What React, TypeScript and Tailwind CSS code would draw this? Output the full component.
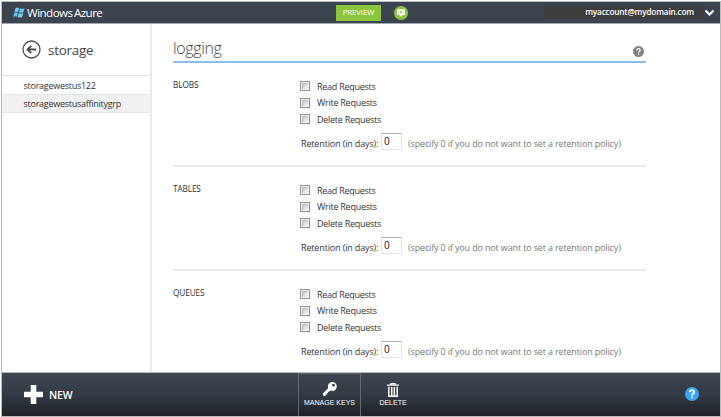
import React from "react";

const requests = ["Read Requests", "Write Requests", "Delete Requests"];

function Checkbox() {
  return (
    <span className="flex size-[10px] shrink-0 border border-[#8e8f8f] bg-[#f4f4f4] p-px">
      <span className="flex-1 border-t border-l border-[#b4b8bb] bg-linear-to-br from-[#c9cdd1] to-[#f3f3f3]" />
    </span>
  );
}

function Section({ title, last }: { title: string; last?: boolean }) {
  return (
    <section
      className={`flex h-[104px] shrink-0 pt-[15px] ${last ? "" : "border-b-2 border-[#e9e9e9]"}`}
    >
      <h2 className="w-[127px] shrink-0 pt-px text-[8.3px] leading-[12px] font-medium tracking-[-0.15px] text-[#333]">
        {title}
      </h2>
      <div className="text-[9px] whitespace-nowrap text-[#333]">
        {requests.map((r) => (
          <div key={r} className="flex h-[16.5px] items-center gap-[7px]">
            <Checkbox />
            <span className="tracking-[-0.26px]">{r}</span>
          </div>
        ))}
        <div className="mt-[5px] flex h-[20px] items-start tracking-[-0.15px]">
          <span className="w-[81px] pt-[3px] pl-[1px] leading-[15px]">Retention (in days):</span>
          <span className="flex h-[17px] w-[21px] items-center rounded-[1px] border border-[#dfe2ec] border-t-[#a9adb5] pt-px pl-[2px] text-[10px] text-[#222]">
            0
          </span>
          <span className="pt-[3px] pl-[6px] leading-[15px] text-[#777]">
            (specify 0 if you do not want to set a retention policy)
          </span>
        </div>
      </div>
    </section>
  );
}

function WindowsLogo() {
  return (
    <svg width="12" height="11" viewBox="0 0 12 11">
      <path d="M2.5 1.1Q4.4.1 6.1 1L5.1 4.9Q3.3 4 1.5 5Z" fill="#79cdf4" />
      <path d="M6.9 1.3Q9 2.3 11.6 1.3L10.5 5.2Q8.2 6.2 5.9 5.2Z" fill="#62c1f0" />
      <path d="M1.2 5.8Q3 4.8 4.9 5.7L3.9 9.6Q2 8.7.2 9.7Z" fill="#62c1f0" />
      <path d="M5.7 6Q7.8 7 10.3 6L9.2 9.9Q7 10.9 4.6 9.9Z" fill="#79cdf4" />
    </svg>
  );
}

export default function App() {
  return (
    <div className="h-[417px] w-[721px] overflow-hidden bg-white pt-px pl-px font-['Open_Sans','Noto_Sans',sans-serif]">
      <div className="flex h-full flex-col border border-[#b9bbbd]">
        <header className="flex h-[22px] shrink-0 items-center border-b border-[#a5a9ad] bg-[#3c4450] text-white">
          <div className="flex w-[334px] items-center gap-[2px] pl-[11px]">
            <WindowsLogo />
            <span className="pt-px text-[11.6px] leading-[20px] tracking-[-0.55px] [word-spacing:-1px]">Windows Azure</span>
          </div>
          <span className="flex h-[16px] w-[45px] items-center justify-center bg-[#8cc63e] text-[7.8px] tracking-[-0.1px]">
            PREVIEW
          </span>
          <svg className="ml-[13px]" width="14" height="14" viewBox="0 0 14 14">
            <circle cx="7" cy="7" r="7" fill="#8cc63e" />
            <path d="M3.2 3.3h7.6v5.6H8.6L7 10.8 5.4 8.9H3.2Z" fill="#fff" />
            <path d="M7 4.6v3M5.5 6.1h3" stroke="#8cc63e" strokeWidth="1" />
          </svg>
          <span className="ml-auto flex h-[12px] w-[160px] items-center justify-end bg-[#3d3d3d] pr-[10px] text-[8.2px] font-semibold tracking-[-0.17px]">
            myaccount@mydomain.com
          </span>
          <svg className="mr-[5px]" width="11" height="8" viewBox="0 0 11 8">
            <path d="M1.5 1.5 5.5 5.5 9.5 1.5" fill="none" stroke="#fff" strokeWidth="2" />
          </svg>
        </header>

        <div className="flex min-h-0 flex-1">
          <nav className="w-[150px] shrink-0 border-r-2 border-[#e9e9e9] text-[9px] tracking-[-0.26px] text-[#333]">
            <div className="flex h-[52px] items-center gap-[7px] border-b border-[#e4e4e4] pl-[20px]">
              <svg width="19" height="19" viewBox="0 0 19 19" fill="none" stroke="#4c4c4c">
                <circle cx="9.5" cy="9.5" r="8.5" strokeWidth="1.3" />
                <path d="M14 9.5H5.8M9.2 5.8 5.5 9.5 9.2 13.2" strokeWidth="1.9" />
              </svg>
              <span className="text-[13.3px] leading-[20px] tracking-[-0.2px] text-[#444]">storage</span>
            </div>
            <div className="flex h-[18px] items-center pt-px pl-[21.5px]">storagewestus122</div>
            <div className="flex h-[19px] items-center border-y border-[#e4e4e4] bg-[#f1f1f1] pl-[21.5px]">
              storagewestusaffinitygrp
            </div>
          </nav>

          <main className="w-[494px] pl-[21px]">
            <div className="flex h-[39px] items-end justify-between border-b-2 border-t-0 border-[#8ebce5]">
              <h1 className="pb-[2px] text-[16px] leading-[22px] font-light tracking-[-0.35px] text-[#444]">logging</h1>
              <svg className="mr-[2px] mb-[4px]" width="11" height="11" viewBox="0 0 11 11">
                <circle cx="5.5" cy="5.5" r="5.5" fill="#828282" />
                <path d="M3.8 4.3Q3.9 2.7 5.5 2.7T7.2 4.2Q7.2 5 6.3 5.5 5.6 5.9 5.6 6.6M5.6 7.5v1.3" fill="none" stroke="#fff" strokeWidth="1.3" />
              </svg>
            </div>
            <Section title="BLOBS" />
            <Section title="TABLES" />
            <Section title="QUEUES" last />
          </main>
        </div>

        <footer className="flex h-[44px] shrink-0 border-t border-[#b5b8ba] bg-linear-to-b from-[#3e4651] via-[#343b46] to-[#1e2228] text-white">
          <div className="flex w-[296px] items-center gap-[6px] pl-[22px]">
            <svg width="19" height="19" viewBox="0 0 19 19">
              <path d="M6.7 0h5.6v6.7H19v5.6h-6.7V19H6.7v-6.7H0V6.7h6.7Z" fill="#fff" />
            </svg>
            <span className="pt-[2px] text-[10.5px] font-semibold tracking-[-0.2px]">NEW</span>
          </div>
          <div className="flex w-[63px] flex-col items-center border-x border-t border-[#666a70] pt-[8px] font-['Liberation_Sans',Arial,sans-serif] text-[7px] leading-[9px]">
            <svg width="14" height="14" viewBox="0 0 14 14">
              <path fillRule="evenodd" d="M9.3 0a4.5 4.5 0 0 1 0 9Q8.3 9 7.4 8.6L6.2 9.8H5v1.4H3.7v1.4L2.5 13.8H0v-2.6L5.2 6.2A4.5 4.5 0 0 1 9.3 0Zm1.1 1.8a1.4 1.4 0 1 0 0 2.8 1.4 1.4 0 0 0 0-2.8Z" fill="#fff" />
            </svg>
            <span className="mt-[2px] whitespace-nowrap">MANAGE KEYS</span>
          </div>
          <div className="flex w-[64px] flex-col items-center pt-[10px] font-['Liberation_Sans',Arial,sans-serif] text-[7px] leading-[9px]">
            <svg width="12" height="14" viewBox="0 0 12 14" fill="none" stroke="#fff">
              <path d="M4 1.4V.6h4v.8M0 2.2h12" strokeWidth="1.3" />
              <path d="M1.8 3.8v9.4h8.4V3.8M4.7 4v9M7.3 4v9" strokeWidth="1.5" />
            </svg>
            <span className="mt-px">DELETE</span>
          </div>
          <svg className="mt-[14px] mr-[21px] ml-auto" width="14" height="14" viewBox="0 0 14 14">
            <circle cx="7" cy="7" r="7" fill="#38a4f3" />
            <path d="M4.9 5.3Q5 3.2 7 3.2T9.1 5.1Q9.1 6.1 8 6.7 7.1 7.3 7.1 8.4M7.1 9.5v1.7" fill="none" stroke="#fff" strokeWidth="1.7" />
          </svg>
        </footer>
      </div>
    </div>
  );
}
